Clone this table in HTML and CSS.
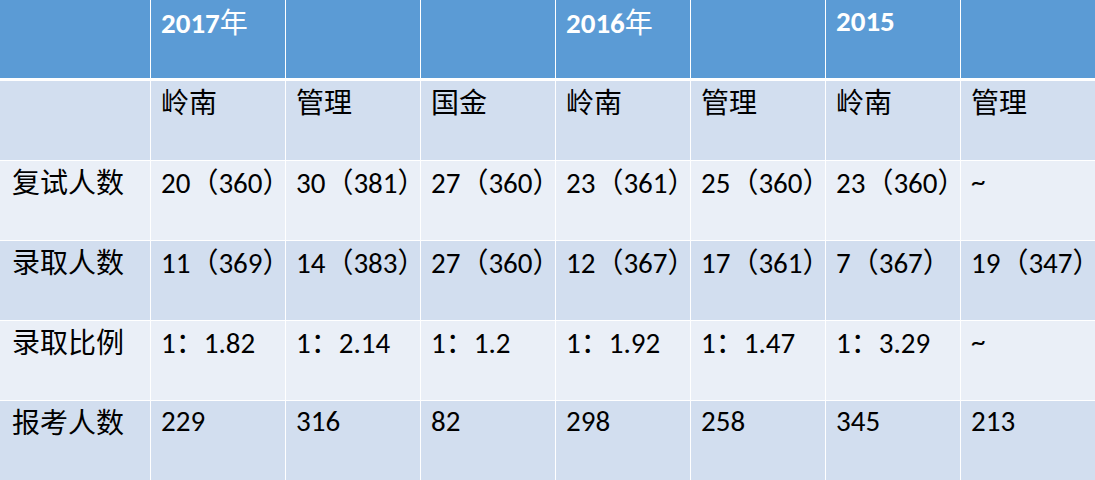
FILE: index.html
```html
<!DOCTYPE html>
<html lang="zh-CN">
<head>
<meta charset="utf-8">
<title>报考数据</title>
<link rel="stylesheet" href="styles.css">
</head>
<body>
<div class="table">
  <div class="cell head"></div>
  <div class="cell head">2017<span class="cjk">年</span></div>
  <div class="cell head"></div>
  <div class="cell head"></div>
  <div class="cell head">2016<span class="cjk">年</span></div>
  <div class="cell head"></div>
  <div class="cell head">2015</div>
  <div class="cell head"></div>

  <div class="cell dark"></div>
  <div class="cell dark cjk">岭南</div>
  <div class="cell dark cjk">管理</div>
  <div class="cell dark cjk">国金</div>
  <div class="cell dark cjk">岭南</div>
  <div class="cell dark cjk">管理</div>
  <div class="cell dark cjk">岭南</div>
  <div class="cell dark cjk">管理</div>

  <div class="cell light cjk">复试人数</div>
  <div class="cell light">20<span class="cjk">（</span>360<span class="cjk">）</span></div>
  <div class="cell light">30<span class="cjk">（</span>381<span class="cjk">）</span></div>
  <div class="cell light">27<span class="cjk">（</span>360<span class="cjk">）</span></div>
  <div class="cell light">23<span class="cjk">（</span>361<span class="cjk">）</span></div>
  <div class="cell light">25<span class="cjk">（</span>360<span class="cjk">）</span></div>
  <div class="cell light">23<span class="cjk">（</span>360<span class="cjk">）</span></div>
  <div class="cell light">~</div>

  <div class="cell dark cjk">录取人数</div>
  <div class="cell dark">11<span class="cjk">（</span>369<span class="cjk">）</span></div>
  <div class="cell dark">14<span class="cjk">（</span>383<span class="cjk">）</span></div>
  <div class="cell dark">27<span class="cjk">（</span>360<span class="cjk">）</span></div>
  <div class="cell dark">12<span class="cjk">（</span>367<span class="cjk">）</span></div>
  <div class="cell dark">17<span class="cjk">（</span>361<span class="cjk">）</span></div>
  <div class="cell dark">7<span class="cjk">（</span>367<span class="cjk">）</span></div>
  <div class="cell dark">19<span class="cjk">（</span>347<span class="cjk">）</span></div>

  <div class="cell light cjk">录取比例</div>
  <div class="cell light">1<span class="cjk">：</span>1.82</div>
  <div class="cell light">1<span class="cjk">：</span>2.14</div>
  <div class="cell light">1<span class="cjk">：</span>1.2</div>
  <div class="cell light">1<span class="cjk">：</span>1.92</div>
  <div class="cell light">1<span class="cjk">：</span>1.47</div>
  <div class="cell light">1<span class="cjk">：</span>3.29</div>
  <div class="cell light">~</div>

  <div class="cell dark cjk">报考人数</div>
  <div class="cell dark">229</div>
  <div class="cell dark">316</div>
  <div class="cell dark">82</div>
  <div class="cell dark">298</div>
  <div class="cell dark">258</div>
  <div class="cell dark">345</div>
  <div class="cell dark">213</div>
</div>
</body>
</html>
```

FILE: styles.css
```css
html, body {
  margin: 0;
  padding: 0;
  background: #ffffff;
}

body {
  width: 1095px;
  height: 480px;
  overflow: hidden;
}

.table {
  display: grid;
  grid-template-columns: 150px repeat(7, 134px);
  grid-template-rows: 80px repeat(5, 79px);
  column-gap: 1px;
  row-gap: 1px;
  background: #ffffff;
  font-family: Carlito, Calibri, "Liberation Sans", "Noto Sans CJK SC", sans-serif;
  font-size: 29px;
  line-height: 34px;
  color: #000000;
}

.cell {
  padding: 3px 0 0 10px;
  white-space: nowrap;
  box-sizing: border-box;
}

.table > .cell:nth-child(8n+1) {
  padding-left: 12px;
}

.cjk {
  font-family: "Noto Sans CJK SC", sans-serif;
  font-weight: 400;
  font-size: 28px;
}

.head {
  height: 78px;
  align-self: start;
  padding-top: 4px;
  background: #5b9bd5;
  color: #ffffff;
  font-weight: 700;
}

.head .cjk {
  font-weight: 400;
}

.dark {
  background: #d2deef;
}

.light {
  background: #eaeff7;
}
```
